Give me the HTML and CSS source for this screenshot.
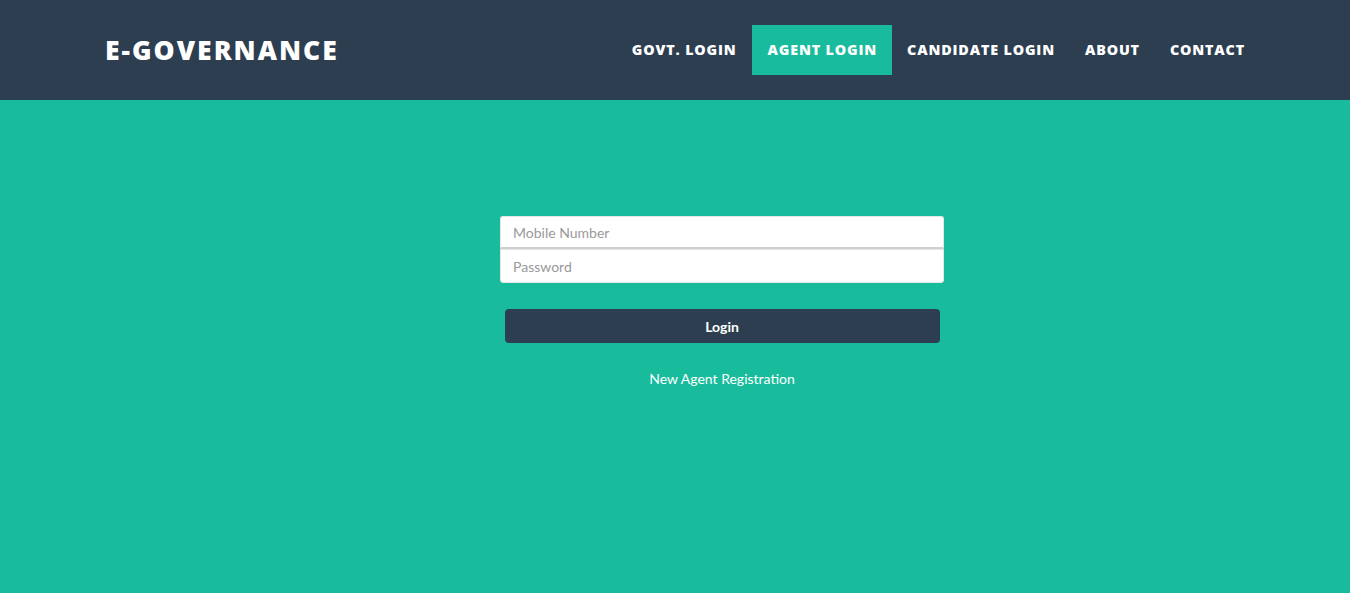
FILE: index.html
```html
<!DOCTYPE html>
<html>
<head>
<meta charset="utf-8">
<link rel="stylesheet" href="styles.css">
</head>
<body>
<header class="navbar">
  <div class="container">
    <a class="brand" href="#">E-GOVERNANCE</a>
    <nav class="nav">
      <a class="nav-link" href="#">GOVT. LOGIN</a>
      <a class="nav-link active" href="#">AGENT LOGIN</a>
      <a class="nav-link" href="#">CANDIDATE LOGIN</a>
      <a class="nav-link" href="#">ABOUT</a>
      <a class="nav-link" href="#">CONTACT</a>
    </nav>
  </div>
</header>
<main class="hero">
  <form class="login-form">
    <div class="inputs">
      <input class="field field-top" type="text" placeholder="Mobile Number">
      <input class="field field-bottom" type="password" placeholder="Password">
    </div>
    <button class="btn" type="button">Login</button>
    <a class="reg-link" href="#">New Agent Registration</a>
  </form>
</main>
</body>
</html>
```
FILE: styles.css
```css
* { box-sizing: border-box; }
html, body { margin: 0; padding: 0; }
body {
  width: 1350px;
  height: 593px;
  overflow: hidden;
  background: #18bc9c;
  font-family: Lato, "Liberation Sans", sans-serif;
  font-size: 14px;
}
.navbar {
  background: #2c3e50;
  height: 100px;
}
.container {
  width: 1170px;
  margin: 0 auto;
  padding: 0 15px;
  height: 100%;
  display: flex;
  align-items: center;
  justify-content: space-between;
}
.brand {
  color: #fff;
  text-decoration: none;
  font-family: "Open Sans", sans-serif;
  font-weight: 800;
  font-size: 26.5px;
  letter-spacing: 2px;
  line-height: 1;
}
.nav {
  display: flex;
  align-items: center;
  margin-right: -15px;
}
.nav-link {
  color: #fff;
  text-decoration: none;
  font-family: "Open Sans", sans-serif;
  font-weight: 800;
  font-size: 14.3px;
  letter-spacing: 0.85px;
  height: 50px;
  display: flex;
  align-items: center;
  padding: 0 15px 2px;
}
.nav-link.active { background: #18bc9c; padding: 0 15px 2px 16px; }
.hero {
  padding-top: 116px;
}
.login-form {
  margin-left: 500px;
  width: 444px;
  display: flex;
  flex-direction: column;
  align-items: center;
}
.inputs {
  width: 100%;
  display: flex;
  flex-direction: column;
}
.field {
  width: 100%;
  border: 1px solid #e6e6e6;
  background: #fff;
  padding: 0 12px;
  font-family: Lato, sans-serif;
  font-size: 14px;
  color: #555;
  outline: none;
}
.field::placeholder { color: #999; }
.field-top {
  border-radius: 3px 3px 0 0;
  border-bottom: 2px solid #cfcfcf;
  height: 33px;
}
.field-bottom {
  border-radius: 0 0 3px 3px;
  height: 34px;
}
.btn {
  margin-top: 26px;
  width: 435px;
  height: 34px;
  background: #2c3e50;
  color: #fff;
  border: none;
  border-radius: 4px;
  font-family: Lato, sans-serif;
  font-weight: 700;
  font-size: 14px;
}
.reg-link {
  margin-top: 26px;
  color: #fff;
  text-decoration: none;
  font-size: 14px;
  line-height: 20px;
}
```
